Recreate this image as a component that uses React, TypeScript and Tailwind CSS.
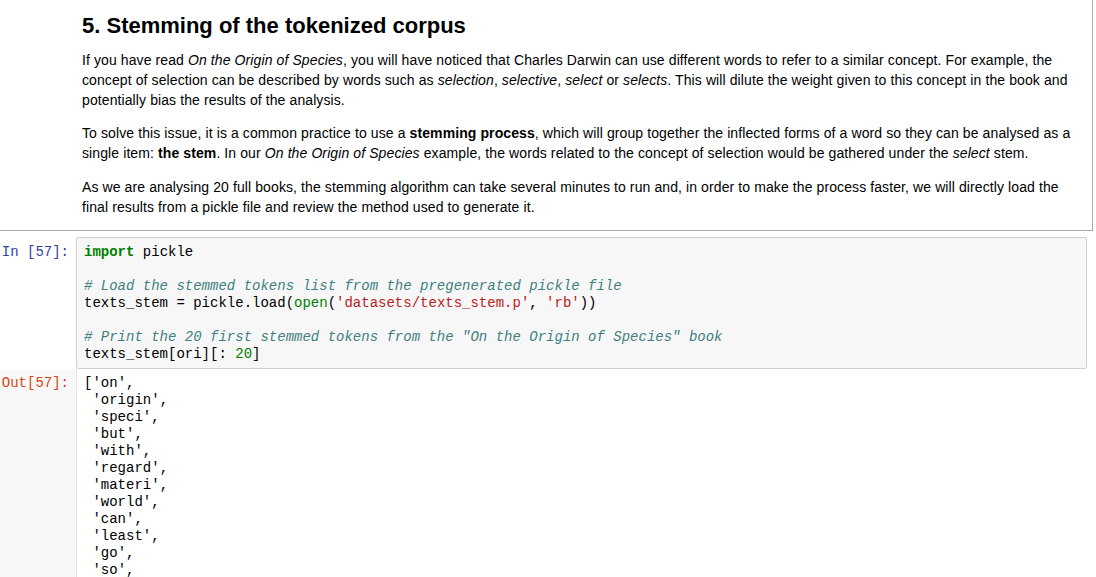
import React from "react"

const mono = { fontFamily: '"Liberation Mono", "DejaVu Sans Mono", monospace' }

const tokens = [
  "on",
  "origin",
  "speci",
  "but",
  "with",
  "regard",
  "materi",
  "world",
  "can",
  "least",
  "go",
  "so",
]

export default function App() {
  return (
    <div
      className="w-[1096px] h-[577px] overflow-hidden bg-white text-black"
      style={{ fontFamily: '"Liberation Sans", Arial, sans-serif' }}
    >
      {/* markdown cell */}
      <div className="w-[1093px] border-r border-b border-[#ababab] pl-[82px] pr-[16px] pt-[13px] pb-[13px]">
        <h2 className="text-[22px] leading-[26px] font-bold mb-[11px]">5. Stemming of the tokenized corpus</h2>
        <div className="text-[14px] leading-[20px] tracking-[0.1px]">
          <p className="mb-[13px]">
            If you have read <i>On the Origin of Species</i>, you will have noticed that Charles Darwin can use different
            words to refer to a similar concept. For example, the concept of selection can be described by words such as{" "}
            <i>selection</i>, <i>selective</i>, <i>select</i> or <i>selects</i>. This will dilute the weight given to this
            concept in the book and potentially bias the results of the analysis.
          </p>
          <p className="mb-[14px]">
            To solve this issue, it is a common practice to use a <b>stemming process</b>, which will group together the
            inflected forms of a word so they can be analysed as a single item: <b>the stem</b>. In our{" "}
            <i>On the Origin of Species</i> example, the words related to the concept of selection would be gathered under
            the <i>select</i> stem.
          </p>
          <p>
            As we are analysing 20 full books, the stemming algorithm can take several minutes to run and, in order to
            make the process faster, we will directly load the final results from a pickle file and review the method
            used to generate it.
          </p>
        </div>
      </div>

      {/* code cell */}
      <div className="flex mt-[6px]" style={mono}>
        <div className="w-[76px] shrink-0 pt-[7px] pr-[7px] text-right text-[14px] leading-[17px] text-[#303f9f]">
          In&nbsp;[57]:
        </div>
        <div className="w-[1011px] rounded-[2px] border border-[#cfcfcf] bg-[#f7f7f7] pl-[7px] pt-[6px] pb-[5px] text-[14px] leading-[17px] whitespace-pre">
          <div>
            <span className="font-bold text-[#008000]">import</span> pickle
          </div>
          <div>&nbsp;</div>
          <div className="italic text-[#408080]"># Load the stemmed tokens list from the pregenerated pickle file</div>
          <div>
            texts_stem = pickle.load(<span className="text-[#008000]">open</span>(
            <span className="text-[#ba2121]">'datasets/texts_stem.p'</span>, <span className="text-[#ba2121]">'rb'</span>))
          </div>
          <div>&nbsp;</div>
          <div className="italic text-[#408080]"># Print the 20 first stemmed tokens from the "On the Origin of Species" book</div>
          <div>
            texts_stem[ori][: <span className="text-[#008000]">20</span>]
          </div>
        </div>
      </div>

      {/* output */}
      <div className="flex" style={mono}>
        <div className="w-[77px] shrink-0 border-r border-[#e3e3e3] bg-[#f8f8f8] pt-[6px] pr-[7px] text-right text-[14px] leading-[17px] text-[#d84315] h-[210px]">
          Out[57]:
        </div>
        <div className="pl-[7px] pt-[6px] text-[14px] leading-[17px] whitespace-pre">
          {tokens.map((t, i) => (
            <div key={t}>
              {i === 0 ? "[" : " "}'{t}',
            </div>
          ))}
        </div>
      </div>
    </div>
  )
}
